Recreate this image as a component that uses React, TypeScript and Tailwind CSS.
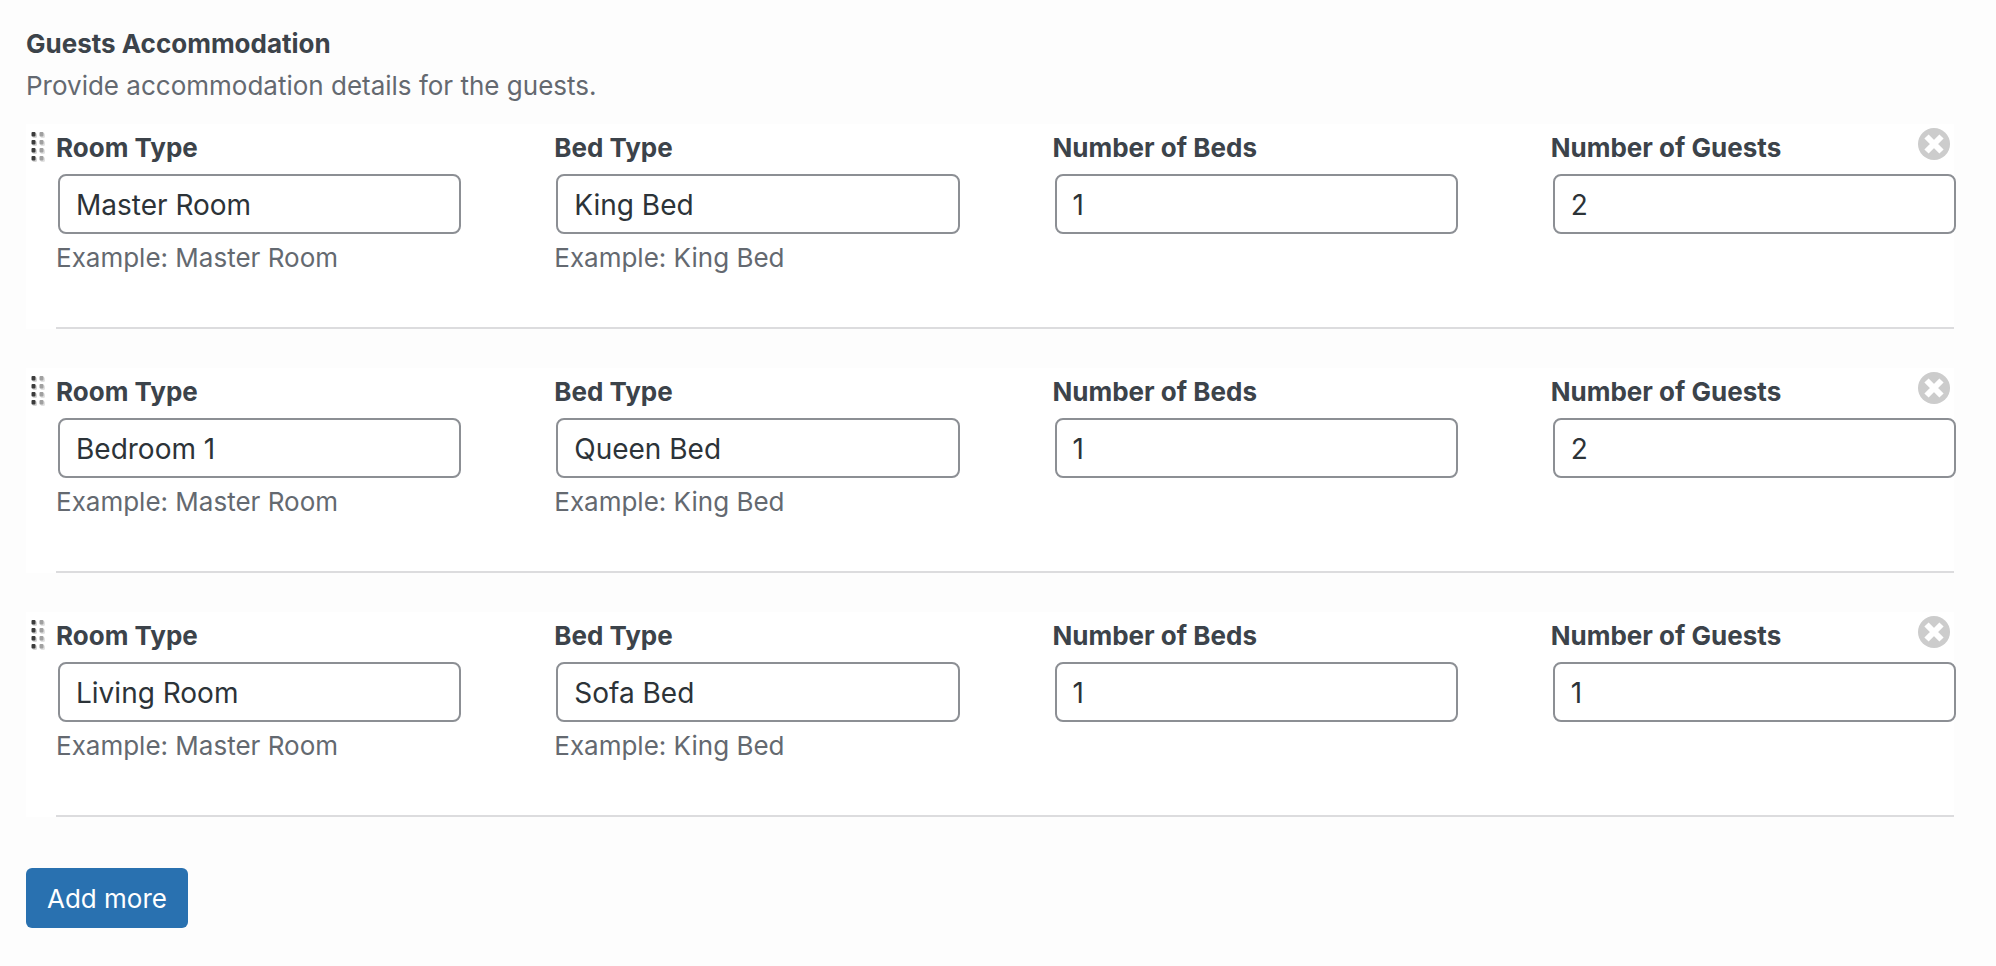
import { useId, useState } from "react";

type Room = { id: number; values: string[] };

const FIELDS = [
  { label: "Room Type", hint: "Example: Master Room" },
  { label: "Bed Type", hint: "Example: King Bed" },
  { label: "Number of Beds", hint: "" },
  { label: "Number of Guests", hint: "" },
];

const INITIAL: Room[] = [
  { id: 1, values: ["Master Room", "King Bed", "1", "2"] },
  { id: 2, values: ["Bedroom 1", "Queen Bed", "1", "2"] },
  { id: 3, values: ["Living Room", "Sofa Bed", "1", "1"] },
];

function DragHandle() {
  return (
    <svg viewBox="0 0 14 32" className="block h-8 w-[14px]" aria-hidden="true">
      {[1, 9, 17, 25].map((y) => (
        <g key={y}>
          <rect x="1.5" y={y + 1} width="4.5" height="5" rx="1.6" fill="#d4d4d4" />
          <rect x="9.5" y={y + 1} width="4.5" height="5" rx="1.6" fill="#e2e2e2" />
          <rect x="0.5" y={y} width="4" height="4.4" rx="1" fill="#3c3c3c" />
          <rect x="8.5" y={y} width="4" height="4.4" rx="1" fill="#a0a0a0" />
        </g>
      ))}
    </svg>
  );
}

function RemoveIcon() {
  return (
    <svg viewBox="0 0 32 32" className="block size-8" aria-hidden="true">
      <circle cx="16" cy="16" r="16" fill="#cccccc" />
      <path d="M8.5 8.5 L23.5 23.5 M23.5 8.5 L8.5 23.5" stroke="#ffffff" strokeWidth="6" />
    </svg>
  );
}

function Field({
  label,
  hint,
  value,
  onChange,
}: {
  label: string;
  hint: string;
  value: string;
  onChange: (v: string) => void;
}) {
  const id = useId();
  return (
    <div className="flex min-w-0 flex-col">
      <label htmlFor={id} className="mb-2 text-[26px] leading-9 font-bold text-[#3c434a]">
        {label}
      </label>
      <input
        id={id}
        type="text"
        value={value}
        onChange={(e) => onChange(e.target.value)}
        className="-mr-[2px] ml-[2px] h-[60px] min-w-0 rounded-lg border-2 border-[#8c8f94] bg-white px-4 pt-[2px] text-[28px] text-[#2c3338] outline-none focus:border-[#2271b1]"
      />
      {hint && <p className="mt-1 text-[26px] leading-10 text-[#646970]">{hint}</p>}
    </div>
  );
}

export default function App() {
  const [rooms, setRooms] = useState(INITIAL);

  const update = (id: number, index: number, value: string) =>
    setRooms((all) =>
      all.map((r) => (r.id === id ? { ...r, values: r.values.map((v, i) => (i === index ? value : v)) } : r)),
    );
  const remove = (id: number) => setRooms((all) => all.filter((r) => r.id !== id));
  const add = () =>
    setRooms((all) => [...all, { id: Math.max(0, ...all.map((r) => r.id)) + 1, values: ["", "", "", ""] }]);

  return (
    <main className="min-h-screen bg-[#fdfdfd] pt-6 pr-[42px] pb-8 pl-[26px] font-['Inter',sans-serif]">
      <h1 className="text-[26px] leading-10 font-bold text-[#3c434a]">Guests Accommodation</h1>
      <p className="mb-4 text-[26px] leading-[44px] text-[#646970]">
        Provide accommodation details for the guests.
      </p>
      <div className="flex flex-col gap-[39px]">
        {rooms.map((room) => (
          <section key={room.id} className="relative flex bg-white">
            <button type="button" aria-label="Move room" className="w-[30px] shrink-0 cursor-move self-start pt-[7px] pl-[5px]">
              <DragHandle />
            </button>
            <div className="grid min-h-[205px] flex-1 grid-cols-4 content-start gap-[95px] border-b-2 border-[#dcdcde] pt-[6px] pb-8">
              {FIELDS.map((f, i) => (
                <Field
                  key={f.label}
                  label={f.label}
                  hint={f.hint}
                  value={room.values[i]}
                  onChange={(v) => update(room.id, i, v)}
                />
              ))}
            </div>
            <button
              type="button"
              aria-label="Remove room"
              onClick={() => remove(room.id)}
              className="absolute top-1 right-1 cursor-pointer"
            >
              <RemoveIcon />
            </button>
          </section>
        ))}
      </div>
      <button
        type="button"
        onClick={add}
        className="mt-[51px] h-[60px] cursor-pointer rounded-md bg-[#2971b0] px-[21px] text-[26px] text-white"
      >
        Add more
      </button>
    </main>
  );
}
